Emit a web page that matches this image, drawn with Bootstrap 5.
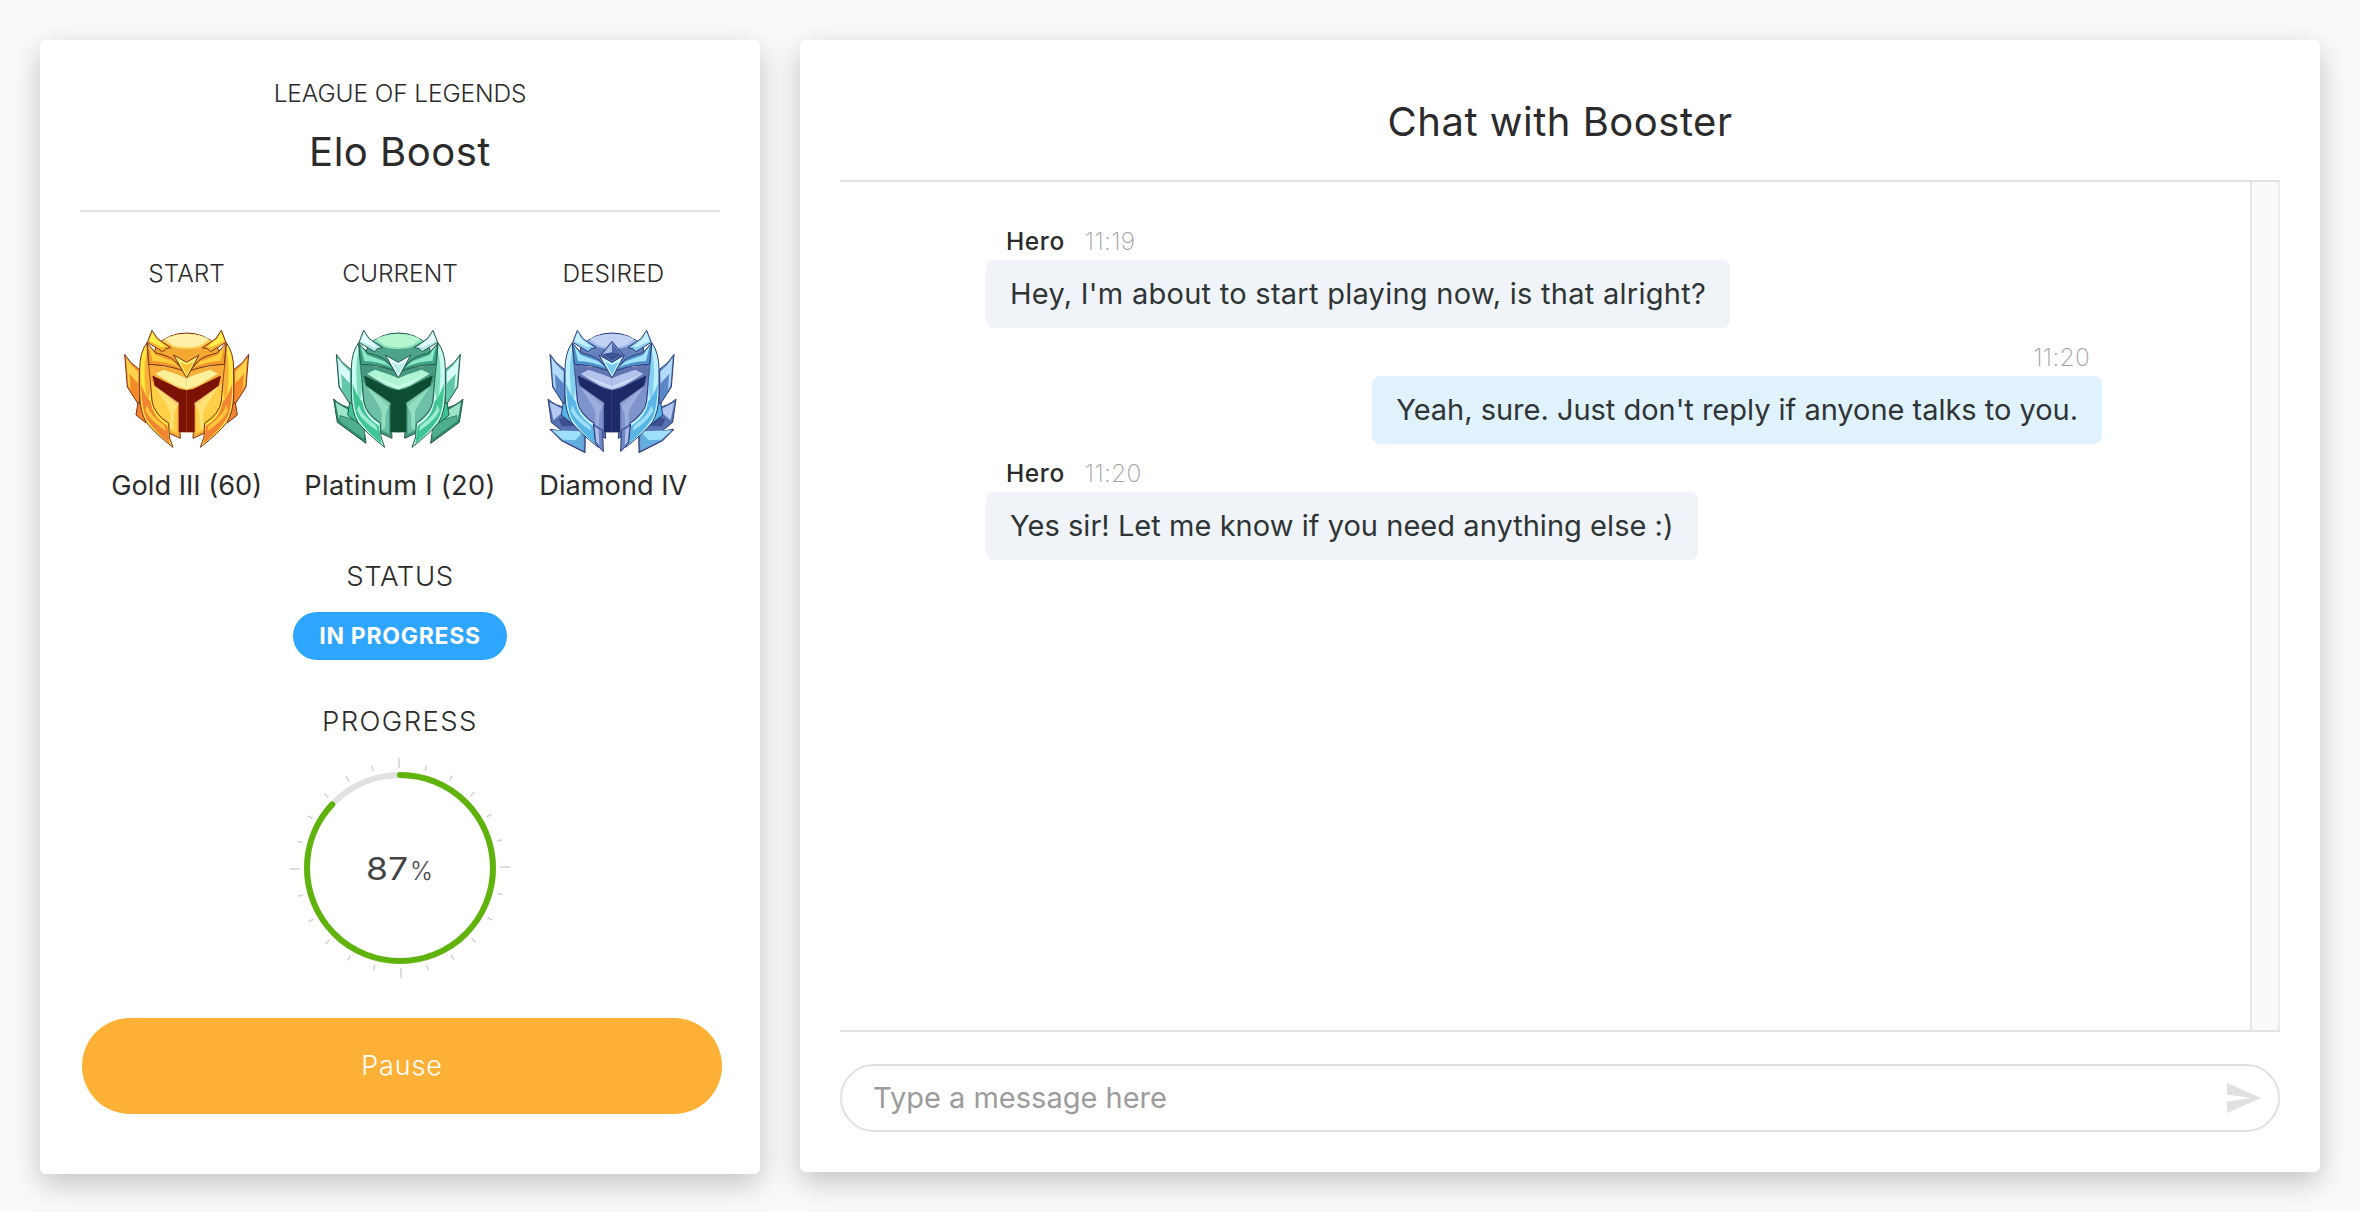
<!DOCTYPE html>
<html lang="en">
<head>
<meta charset="utf-8">
<meta name="viewport" content="width=device-width, initial-scale=1">
<title>Elo Boost</title>
<link rel="stylesheet" href="https://cdn.jsdelivr.net/npm/bootstrap@5.3.0/dist/css/bootstrap.min.css">
<style>
body{background:#fafafa;color:#2b2b2b;font-family:Inter,Roboto,sans-serif;font-size:28px;height:1212px;overflow:hidden}
.panel{background:#fff;border-radius:6px;box-shadow:0 10px 30px rgba(0,0,0,.22)}
.order-panel{width:720px;height:1134px}
.chat-panel{width:1520px;height:1132px}
.order-head{height:172px;padding-top:38px;border-bottom:2px solid #e2e2e2}
.game{font-size:24.5px;font-weight:300;line-height:30px;letter-spacing:-.12px}
.title{font-size:40px;font-weight:400;line-height:48px;letter-spacing:.5px;margin:0}
.order-head .title{margin-top:20px}
.ranks{padding-top:46px}
.rank-label{font-size:24.5px;font-weight:300;line-height:30px}
.rank svg{display:block;margin:27px auto 0}
.rank-name{font-size:27.2px;font-weight:370;line-height:36px;white-space:nowrap}
.section-label{font-size:27.5px;font-weight:300;line-height:36px}
.pill{background:#2ea6ff;color:#fff;height:48px;width:214px;font-size:23px;font-weight:750;letter-spacing:.7px}
.pause{height:96px;background:#ffb037;border:0;color:#fff;font-size:27px;font-weight:300;letter-spacing:.8px;width:640px;margin:28px 0 0 2px}
.pause:hover{background:#f7a627;color:#fff}
.chat-head{height:142px;border-bottom:2px solid #e2e2e2}
.chat-body{height:850px;border-bottom:2px solid #e2e2e2}
.messages{padding:30px 148px 0 146px}
.track{width:30px;background:#fafafa;border-left:2px solid #e6e6e6;border-right:2px solid #ececec}
.meta{height:48px;padding:10px 12px 0 20px;font-size:24.5px}
.meta b{font-weight:500;letter-spacing:.6px;margin-right:20px}
.meta time{font-weight:250;color:#a2a2a2;letter-spacing:.3px}
.bubble{height:68px;padding:0 24px;border-radius:8px;background:#f0f4f8;color:#2f3437;font-size:29px;font-weight:370;white-space:nowrap}
.mine{background:#e0f2fc}
.composer{height:68px;margin-top:32px;border:2px solid #e0e0e0}
.composer input,.composer input:focus{background:transparent;border:0;box-shadow:none;font-size:29px;font-weight:370;padding:0 31px}
.composer input::placeholder{color:#9c9c9c;opacity:1}
.send{width:68px;padding:0 17px;border:0;background:none;line-height:0}
.gold{--line:#7c3016;--hi:#fff3a0;--hornA:#fff04e;--hornB:#fbb62c;--domeA:#fff2a8;--domeB:#fbd45f;--shade:#f3a832;--wingA:#ffd24a;--wingB:#f48a28;--sideA:#ffe63c;--sideB:#f28433;--bandA:#ffcf3e;--bandB:#f29a2c;--face:#f7ad37;--faceB:#ffcf45;--brow:#fff09c;--eye:#7b1204;--crest:#fff06e;--crestB:#fbc032}
.plat{--line:#23584b;--hi:#d3fff0;--hornA:#e6fbff;--hornB:#b3e8e8;--domeA:#b4f7cf;--domeB:#8fe0bd;--shade:#4da48a;--wingA:#d8fbf6;--wingB:#62c7a9;--sideA:#c9fbf0;--sideB:#3fc493;--bandA:#8fe9c8;--bandB:#3da183;--face:#45987f;--faceB:#6cc0a8;--brow:#b0f5d3;--eye:#0d4d31;--crest:#eefcff;--crestB:#b4ece6}
.diam{--line:#2c3c76;--hi:#d8e8ff;--hornA:#c4f0ff;--hornB:#8fd0f2;--domeA:#c0d2f4;--domeB:#a4baea;--shade:#6480bd;--wingA:#b4dcfa;--wingB:#5b86c8;--sideA:#bdf0ff;--sideB:#58b6e6;--bandA:#a3e2fb;--bandB:#4f91cd;--face:#5f74b0;--faceB:#8094cc;--brow:#b3c3ec;--eye:#1d2a68;--crest:#c8f4ff;--crestB:#79c8ee}
.helm path{stroke-linejoin:round}
</style>
</head>
<body>
<svg width="0" height="0" class="position-absolute" aria-hidden="true">
  <defs>
    <g id="dome">
      <path d="M-92 92Q-52 54 0 54T92 92L104 150H-104Z" fill="var(--shade)" stroke="var(--line)" stroke-width="3"/>
      <path d="M-74 78Q-42 56 0 56T74 78L52 90Q40 102 0 102T-52 90Z" fill="var(--domeB)"/>
      <path d="M-66 72Q-38 57 0 57T66 72L46 88Q30 97 0 97T-46 88Z" fill="var(--domeA)"/>
    </g>
    <g id="half">
      <path d="M-104 46L-88 70Q-72 82 -48 98L-62 101L-72 110L-118 82Z" fill="var(--hornB)" stroke="var(--line)" stroke-width="3"/>
      <path d="M-103 51L-91 72L-62 95L-75 96L-113 78Z" fill="var(--hornA)"/>
      <path d="M1 160V352H-20L-19 370L-54 354L-90 310L-113 250V147Q-60 158 1 160Z" fill="var(--face)"/>
      <path d="M-20 352L-19 370L-54 354L-90 310" fill="none" stroke="var(--line)" stroke-width="3"/>
      <path d="M-106 198L-96 216L-40 262L-28 277V356L-52 346L-54 322Q-96 292 -102 262Z" fill="var(--faceB)"/>
      <path d="M-103 182L-96 212L-24 266V352H1V226L-20 222L-98 184Z" fill="var(--eye)"/>
      <path d="M-97 212L-22 264L-37 292L-40 340L-50 344L-50 290L-62 266Z" fill="var(--brow)" opacity=".55"/>
      <path d="M-94 176L-70 164L-30 178L1 190V222L-34 208Z" fill="var(--brow)"/>
      <path d="M-94 176L1 214V224L-36 212Z" fill="var(--hi)" opacity=".75"/>
      <path d="M-119 84L-92 114Q-54 122 -36 137L1 180L-14 166Q-60 150 -113 148Z" fill="var(--bandB)" stroke="var(--line)" stroke-width="3"/>
      <path d="M-113 92L-93 120L-42 139L-18 158Q-62 138 -102 138Z" fill="var(--bandA)"/>
      <path d="M-119 83Q-141 112 -141 164V236Q-140 292 -121 322Q-96 354 -41 397L-52 366L-54 325Q-98 298 -104 258L-110 190Q-118 120 -119 83Z" fill="var(--sideA)" stroke="var(--line)" stroke-width="3"/>
      <path d="M-137 206Q-136 286 -118 315Q-94 350 -51 386L-58 332Q-102 306 -108 260Q-122 250 -137 206Z" fill="var(--sideB)"/>
      <path d="M-118 270Q-112 300 -66 332L-62 348Q-110 318 -124 286Z" fill="var(--sideA)" opacity=".7"/>
      <path d="M-119 108Q-128 140 -126 190L-121 262Q-106 250 -110 190Z" fill="var(--sideB)" opacity=".55"/>
    </g>
    <g id="wing">
      <path d="M-186 118Q-172 144 -141 164V274L-178 216Z" fill="var(--wingB)" stroke="var(--line)" stroke-width="3"/>
      <path d="M-182 128Q-168 150 -145 170L-146 205L-172 176L-168 224L-175 212Z" fill="var(--wingA)"/>
      <path d="M-146 262L-152 300L-122 324L-116 282Z" fill="var(--sideB)" stroke="var(--line)" stroke-width="3"/>
    </g>
    <path id="crest" d="M-39 120L0 142L37 120L0 189Z" fill="var(--crest)" stroke="var(--line)" stroke-width="3"/>
    <path id="crest-low" d="M-20 140L0 150L20 140L0 180Z" fill="var(--crestB)"/>
    <g id="plat-wing">
      <path d="M-194 252Q-172 274 -138 280L-106 318L-97 385L-183 322Z" fill="#2f8a6c" stroke="var(--line)" stroke-width="3"/>
      <path d="M-188 262L-142 290L-122 316L-176 300L-178 316Z" fill="#9fe6c8"/>
      <path d="M-174 304L-120 320L-101 350L-103 372L-176 319Z" fill="#4fae8c"/>
    </g>
    <g id="diam-wing">
      <path d="M-192 252Q-168 274 -136 278L-106 336L-80 345L-81 413L-152 377L-186 343L-150 348L-182 322Z" fill="#5873b4" stroke="var(--line)" stroke-width="3"/>
      <path d="M-187 262L-142 286L-160 302L-176 316Z" fill="#b3c9f1"/>
      <path d="M-160 312L-120 300L-104 332L-150 334Z" fill="#3b4f90"/>
      <path d="M-180 346L-86 349V405L-148 374Z" fill="#9de0f8"/>
      <path d="M-148 374L-110 376L-86 350V405Z" fill="#62afdf"/>
    </g>
    <g id="diam-chin">
      <path d="M-56 328L-28 346L-26 410L-50 385Z" fill="#6f86c2" stroke="var(--line)" stroke-width="3"/>
      <path d="M-51 336L-40 344L-38 390L-47 380Z" fill="#aebfe8"/>
    </g>
  </defs>
</svg>

<main class="d-flex align-items-start" style="gap:40px;padding:40px">
  <section class="panel order-panel flex-shrink-0 px-0">
    <div style="padding:0 40px">
      <header class="order-head text-center">
        <div class="game">LEAGUE OF LEGENDS</div>
        <h1 class="title">Elo Boost</h1>
      </header>
      <div class="ranks row g-0 text-center">
        <div class="rank col-4">
          <div class="rank-label">START</div>
          <svg class="helm gold" width="160" height="153" viewBox="-239 0 480 459">
            <use href="#dome"/>
            <use href="#wing"/><use href="#wing" transform="scale(-1 1)"/>
            <use href="#half"/><use href="#half" transform="scale(-1 1)"/>
            <use href="#crest"/><use href="#crest-low"/>
          </svg>
          <div class="rank-name">Gold III (60)</div>
        </div>
        <div class="rank col-4">
          <div class="rank-label">CURRENT</div>
          <svg class="helm plat" width="160" height="153" viewBox="-235 0 480 459">
            <use href="#dome"/>
            <use href="#plat-wing"/><use href="#plat-wing" transform="scale(-1 1)"/>
            <use href="#wing"/><use href="#wing" transform="scale(-1 1)"/>
            <use href="#half"/><use href="#half" transform="scale(-1 1)"/>
            <use href="#crest"/><use href="#crest-low"/>
          </svg>
          <div class="rank-name" style="letter-spacing:.3px">Platinum I (20)</div>
        </div>
        <div class="rank col-4">
          <div class="rank-label">DESIRED</div>
          <svg class="helm diam" width="160" height="153" viewBox="-237 0 480 459">
            <use href="#dome"/>
            <use href="#diam-wing"/><use href="#diam-wing" transform="scale(-1 1)"/>
            <use href="#wing"/><use href="#wing" transform="scale(-1 1)"/>
            <use href="#half"/><use href="#half" transform="scale(-1 1)"/>
            <use href="#diam-chin"/><use href="#diam-chin" transform="scale(-1 1)"/>
            <use href="#crest"/><use href="#crest-low"/>
            <path d="M0 79L32 118L0 142L-32 118Z" fill="#7f95cc" stroke="#2c3c76" stroke-width="3"/>
            <path d="M0 84V112L-27 118Z" fill="#a9bbe6"/><path d="M0 84V112L27 118Z" fill="#5069ab"/>
            <path d="M0 112L28 118L0 138L-28 118Z" fill="#3c5296"/>
          </svg>
          <div class="rank-name">Diamond IV</div>
        </div>
      </div>
      <div class="d-flex flex-column align-items-center" style="margin-top:54px">
        <div class="section-label" style="letter-spacing:.6px">STATUS</div>
        <span class="pill rounded-pill d-flex align-items-center justify-content-center" style="margin-top:18px">IN PROGRESS</span>
        <div class="section-label" style="margin-top:43px;letter-spacing:1.4px">PROGRESS</div>
        <svg id="gauge" width="260" height="251" viewBox="270 739 260 251">
          <g id="ticks" stroke="#d2d2d2" stroke-width="1.5"></g>
          <circle cx="400" cy="868" r="93" fill="none" stroke="#e1e1e1" stroke-width="6"/>
          <circle cx="400" cy="868" r="93" fill="none" stroke="#5fb30b" stroke-width="6" stroke-linecap="round" pathLength="100" stroke-dasharray="87 100" transform="rotate(-90 400 868)"/>
          <text x="366" y="880" font-size="31.5" fill="#444" textLength="42" lengthAdjust="spacingAndGlyphs">87</text>
          <text x="410" y="880" font-size="25" font-weight="300" fill="#444" textLength="23" lengthAdjust="spacingAndGlyphs">%</text>
        </svg>
      </div>
      <button type="button" class="pause btn rounded-pill">Pause</button>
    </div>
  </section>

  <section class="panel chat-panel flex-shrink-0">
    <div style="padding:0 40px">
      <header class="chat-head d-flex align-items-center justify-content-center" style="padding-top:23px">
        <h2 class="title">Chat with Booster</h2>
      </header>
      <div class="chat-body d-flex">
        <div class="messages flex-grow-1 d-flex flex-column">
          <div class="meta d-flex align-items-center"><b>Hero</b><time>11:19</time></div>
          <div class="bubble d-flex align-items-center align-self-start" style="letter-spacing:.27px">Hey, I'm about to start playing now, is that alright?</div>
          <div class="meta d-flex align-items-center justify-content-end"><time>11:20</time></div>
          <div class="bubble mine d-flex align-items-center align-self-end" style="letter-spacing:-.02px">Yeah, sure. Just don't reply if anyone talks to you.</div>
          <div class="meta d-flex align-items-center"><b>Hero</b><time>11:20</time></div>
          <div class="bubble d-flex align-items-center align-self-start" style="letter-spacing:.04px">Yes sir! Let me know if you need anything else :)</div>
        </div>
        <div class="track"></div>
      </div>
      <form class="composer rounded-pill d-flex align-items-stretch">
        <input type="text" class="form-control rounded-pill" placeholder="Type a message here" aria-label="Message">
        <button type="button" class="send" aria-label="Send">
          <svg width="34" height="30" viewBox="0 0 34 30"><path d="M0 0L34 15L0 30V18.5L24 15L0 11.5Z" fill="#e0e0e0"/></svg>
        </button>
      </form>
    </div>
  </section>
</main>
<script src="https://cdn.jsdelivr.net/npm/bootstrap@5.3.0/dist/js/bootstrap.bundle.min.js"></script>
<script>
// 24 scale marks around the gauge, a long one at every quarter
const ticks = document.getElementById('ticks');
for (let i = 0; i < 24; i++) {
  const line = document.createElementNS('http://www.w3.org/2000/svg', 'line');
  line.setAttribute('x1', 400); line.setAttribute('x2', 400);
  line.setAttribute('y1', i % 6 ? 767.5 : 768);
  line.setAttribute('y2', i % 6 ? 762 : 758);
  line.setAttribute('transform', `rotate(${i * 15 - 0.5} 400 868)`);
  ticks.appendChild(line);
}
</script>
</body>
</html>
